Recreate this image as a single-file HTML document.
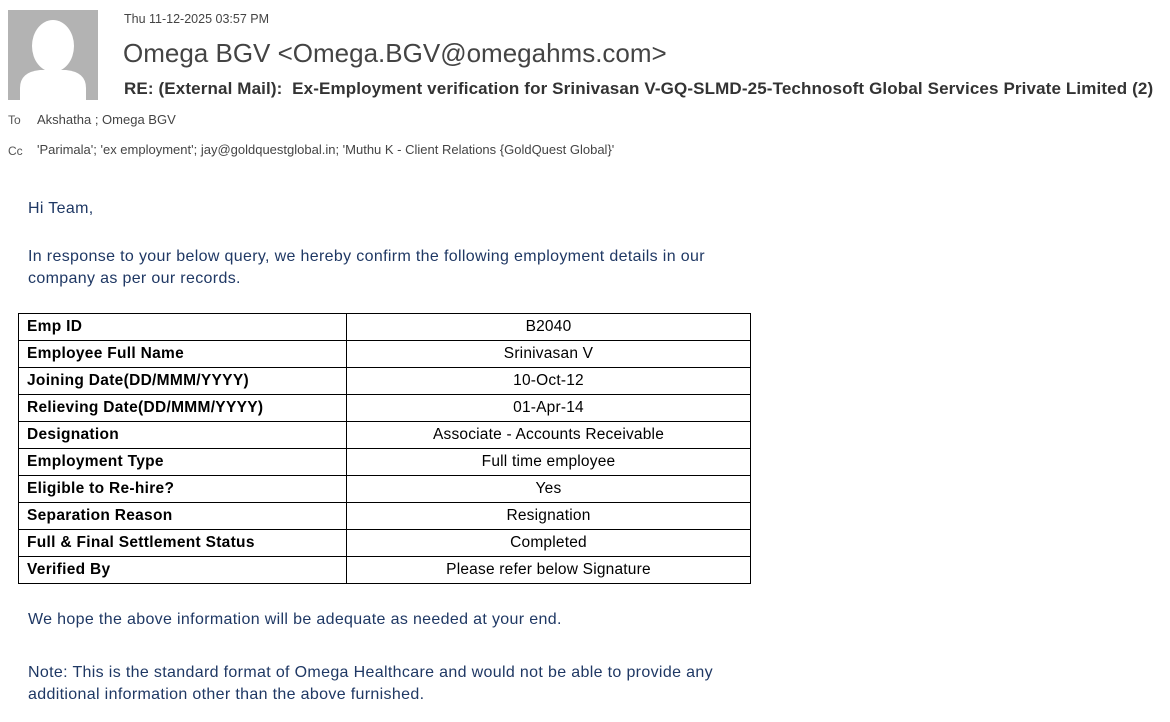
<!DOCTYPE html>
<html><head><style>
body{margin:0;width:1170px;height:722px;background:#fff;font-family:"Liberation Sans",sans-serif;position:relative;overflow:hidden}
.a{position:absolute;white-space:nowrap}
.blue{color:#1f3864;font-size:16px;letter-spacing:0.34px}
table{position:absolute;left:18px;top:313px;width:733px;border-collapse:collapse;font-size:15.5px;color:#000}
td{border:1px solid #000;height:26px;padding:0 8px;line-height:26px}
td:first-child{font-weight:bold;width:311px;letter-spacing:0.3px}
td:last-child{text-align:center;letter-spacing:0.2px}
</style></head><body>
<div class="a" style="left:8px;top:10px;width:90px;height:90px;background:#b3b3b3;overflow:hidden">
<svg width="90" height="90" viewBox="0 0 90 90"><ellipse cx="45" cy="36" rx="21" ry="26" fill="#fff"/><path d="M12 90 L12 78 Q12 62 32 60 L58 60 Q78 62 78 78 L78 90 Z" fill="#fff"/></svg></div>
<div class="a" style="left:124px;top:12px;font-size:12.5px;color:#444">Thu 11-12-2025 03:57 PM</div>
<div class="a" style="left:123px;top:38px;font-size:26px;color:#444">Omega BGV &lt;Omega.BGV@omegahms.com&gt;</div>
<div class="a" style="left:124px;top:79px;font-size:17px;font-weight:bold;color:#333;letter-spacing:0.13px">RE: (External Mail): &nbsp;Ex-Employment verification for Srinivasan V-GQ-SLMD-25-Technosoft Global Services Private Limited (2)</div>
<div class="a" style="left:8px;top:113px;font-size:12px;color:#555">To</div>
<div class="a" style="left:37px;top:112px;font-size:13px;color:#444">Akshatha ; Omega BGV</div>
<div class="a" style="left:8px;top:144px;font-size:12px;color:#555">Cc</div>
<div class="a" style="left:37px;top:142px;font-size:13px;color:#444">'Parimala'; 'ex employment'; jay@goldquestglobal.in; 'Muthu K - Client Relations {GoldQuest Global}'</div>
<div class="a blue" style="left:28px;top:200px">Hi Team,</div>
<div class="a blue" style="left:28px;top:246px;line-height:22px">In response to your below query, we hereby confirm the following employment details in our<br>company as per our records.</div>
<table>
<tr><td>Emp ID</td><td>B2040</td></tr>
<tr><td>Employee Full Name</td><td>Srinivasan V</td></tr>
<tr><td>Joining Date(DD/MMM/YYYY)</td><td>10-Oct-12</td></tr>
<tr><td>Relieving Date(DD/MMM/YYYY)</td><td>01-Apr-14</td></tr>
<tr><td>Designation</td><td>Associate - Accounts Receivable</td></tr>
<tr><td>Employment Type</td><td>Full time employee</td></tr>
<tr><td>Eligible to Re-hire?</td><td>Yes</td></tr>
<tr><td>Separation Reason</td><td>Resignation</td></tr>
<tr><td>Full &amp; Final Settlement Status</td><td>Completed</td></tr>
<tr><td>Verified By</td><td>Please refer below Signature</td></tr>
</table>
<div class="a blue" style="left:28px;top:611px">We hope the above information will be adequate as needed at your end.</div>
<div class="a blue" style="left:28px;top:662px;line-height:22px">Note: This is the standard format of Omega Healthcare and would not be able to provide any<br>additional information other than the above furnished.</div>
</body></html>
